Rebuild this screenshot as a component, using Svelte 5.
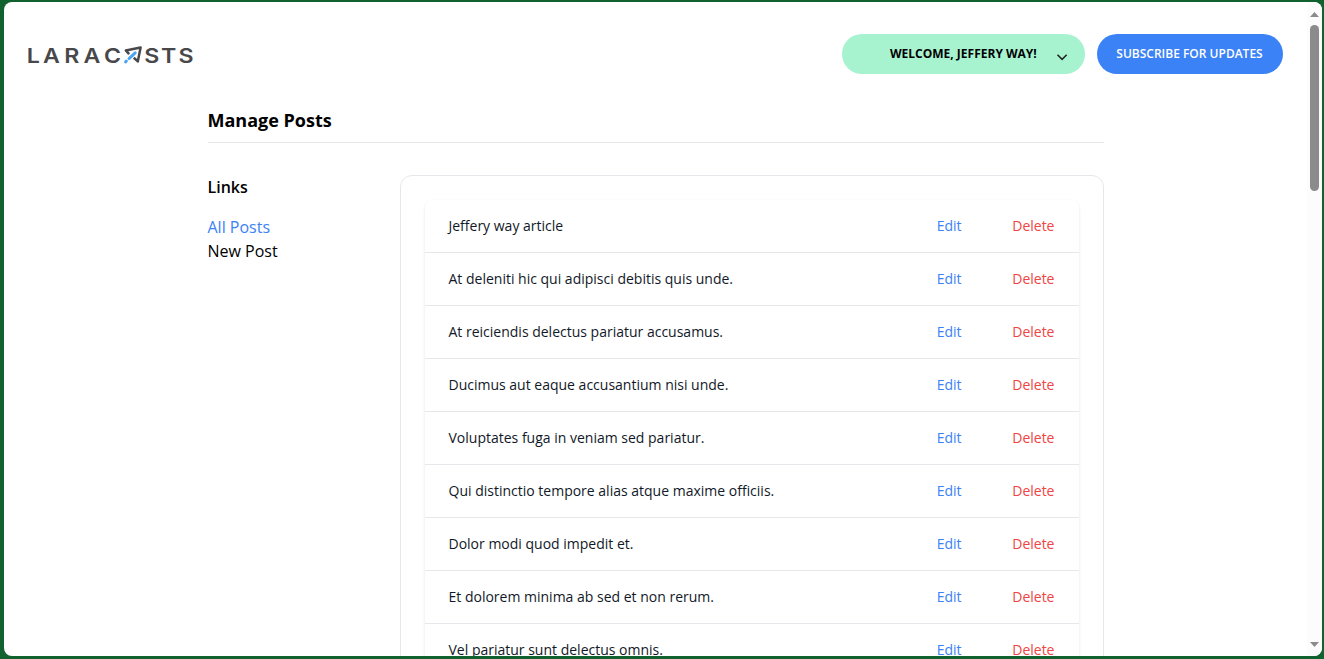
<script>
  const posts = [
    'Jeffery way article',
    'At deleniti hic qui adipisci debitis quis unde.',
    'At reiciendis delectus pariatur accusamus.',
    'Ducimus aut eaque accusantium nisi unde.',
    'Voluptates fuga in veniam sed pariatur.',
    'Qui distinctio tempore alias atque maxime officiis.',
    'Dolor modi quod impedit et.',
    'Et dolorem minima ab sed et non rerum.',
    'Vel pariatur sunt delectus omnis.'
  ];
</script>

<div class="frame">
  <div class="window">
    <div class="page">
      <header>
        <svg class="logo" width="168" height="24" viewBox="0 0 168 24" aria-label="Laracasts">
          <g transform="scale(1.13 1)">
            <text y="20.6" x="-1.1 13.3 32 49.2 67.3">LARAC</text>
            <text y="20.6" x="102.8 117.6 133.3">STS</text>
          </g>
          <path d="M101.2 12.2 97.8 8.4 112.6 5.6 109.8 19.4 105.8 15.8" fill="none" stroke="#48484a" stroke-width="2.5" stroke-linejoin="round" />
          <path d="M97.6 19.8 107.2 10.8" fill="none" stroke="#4aa5f5" stroke-width="3" stroke-linecap="round" stroke-dasharray="1 3.7 9" />
        </svg>
        <nav>
          <button class="welcome">
            <span>Welcome, Jeffery Way!</span>
            <svg width="22" height="22" viewBox="0 0 22 22"><path d="M6.5 8.8 11.1 13.4 15.7 8.8" fill="none" stroke="#222" stroke-width="1.5" /></svg>
          </button>
          <a class="subscribe" href="#subscribe">Subscribe for Updates</a>
        </nav>
      </header>

      <section>
        <h1>Manage Posts</h1>
        <div class="columns">
          <aside>
            <h2>Links</h2>
            <ul>
              <li class="active">All Posts</li>
              <li>New Post</li>
            </ul>
          </aside>
          <main>
            <div class="table">
              {#each posts as post}
                <div class="row">
                  <span class="title">{post}</span>
                  <span class="edit">Edit</span>
                  <span class="delete">Delete</span>
                </div>
              {/each}
            </div>
          </main>
        </div>
      </section>
    </div>
    <div class="scrollbar">
      <svg width="9" height="5" viewBox="0 0 9 5"><path d="M0 5 4.5 0 9 5Z" fill="#8b8b8b" /></svg>
      <div class="thumb"></div>
      <svg class="down" width="9" height="5" viewBox="0 0 9 5"><path d="M0 0 4.5 5 9 0Z" fill="#8b8b8b" /></svg>
    </div>
  </div>
</div>

<style>
  .frame, .frame * { box-sizing: border-box; }
  .frame {
    width: 1324px; height: 659px; padding: 2px 2px 3px 4px;
    background: #11622f; overflow: hidden;
    font-family: "Open Sans", sans-serif; color: #000;
  }
  .window { display: flex; height: 654px; border-radius: 8px; overflow: hidden; background: #fff; }
  .page { flex: 1; min-width: 0; padding: 32px 24px 0; overflow: hidden; }
  header { display: flex; justify-content: space-between; align-items: center; height: 40px; }
  .logo { overflow: visible; }
  .logo text { font: 600 20.5px Inter, sans-serif; fill: #48484a; }
  nav { display: flex; gap: 12px; }
  .welcome {
    display: flex; align-items: center; width: 243px; height: 40px; border: 0;
    border-radius: 20px; padding: 0 12px 0 48px; background: #a7f3d0; justify-content: space-between;
    font: 700 12px/16px "Open Sans", sans-serif; text-transform: uppercase; color: #000;
  }
  .welcome span { white-space: nowrap; }
  .welcome svg { margin-top: 5px; }
  .subscribe {
    width: 186px; height: 40px; padding-right: 1px; border-radius: 20px; background: #3b82f6; color: #fff;
    font-size: 12px; font-weight: 600; line-height: 39px; text-align: center;
    text-transform: uppercase; text-decoration: none; white-space: nowrap;
  }
  section { width: 896px; margin: 32px 0 0 179.5px; }
  h1 { margin: 0 0 32px; padding-bottom: 8px; border-bottom: 1px solid #e5e7eb; font-size: 18px; line-height: 28px; font-weight: 700; }
  .columns { display: flex; }
  aside { width: 192px; }
  h2 { margin: 0 0 16px; font-size: 16px; line-height: 24px; font-weight: 600; }
  ul { margin: 0; padding: 0; list-style: none; font-size: 16px; line-height: 24px; }
  .active { color: #3b82f6; }
  main { flex: 1; border: 1px solid #e5e7eb; border-radius: 12px; padding: 24px; }
  .table { border-radius: 8px; box-shadow: 0 1px 3px rgba(0, 0, 0, .1), 0 1px 2px -1px rgba(0, 0, 0, .1); }
  .row { display: flex; align-items: center; height: 53px; border-bottom: 1px solid #e5e7eb; padding: 0 24px; font-size: 14px; line-height: 20px; }
  .title { flex: 1; color: #111827; }
  .edit { width: 75.5px; color: #3b82f6; }
  .delete { color: #ef4444; }
  .scrollbar { width: 15px; background: #fcfcfc; display: flex; flex-direction: column; align-items: center; padding: 10px 0 9px; }
  .thumb { width: 9px; height: 166px; margin-top: 8px; border-radius: 5px; background: #8b8b8b; }
  .down { margin-top: auto; }
</style>
